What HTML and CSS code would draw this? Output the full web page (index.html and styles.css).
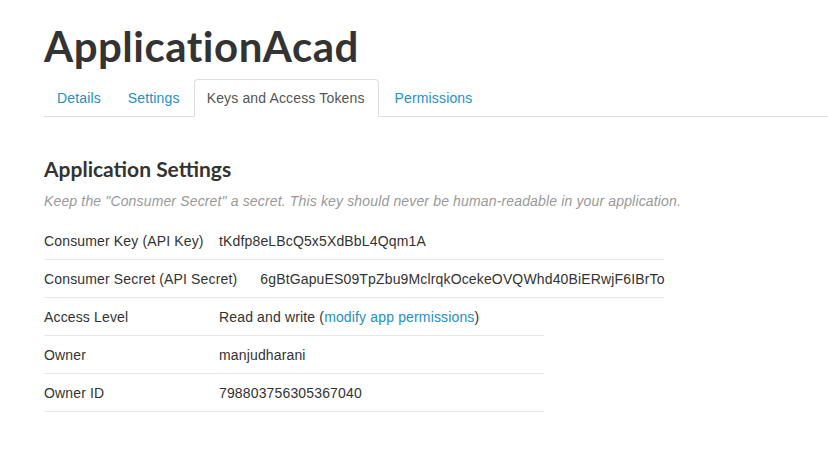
FILE: index.html
```html
<!DOCTYPE html>
<html>
<head>
<meta charset="utf-8">
<link rel="stylesheet" href="styles.css">
</head>
<body>
<div class="page">
  <h1 class="app-title">ApplicationAcad</h1>
  <ul class="tabs">
    <li class="tab"><a href="#">Details</a></li>
    <li class="tab"><a href="#">Settings</a></li>
    <li class="tab active"><a href="#">Keys and Access Tokens</a></li>
    <li class="tab"><a href="#">Permissions</a></li>
  </ul>
  <section class="settings">
    <h2 class="section-title">Application Settings</h2>
    <p class="hint">Keep the "Consumer Secret" a secret. This key should never be human-readable in your application.</p>
    <div class="group group-keys">
      <div class="row"><span class="label">Consumer Key (API Key)</span><span class="value">tKdfp8eLBcQ5x5XdBbL4Qqm1A</span></div>
      <div class="row"><span class="label label-wide">Consumer Secret (API Secret)</span><span class="value">6gBtGapuES09TpZbu9MclrqkOcekeOVQWhd40BiERwjF6IBrTo</span></div>
    </div>
    <div class="group group-info">
      <div class="row"><span class="label">Access Level</span><span class="value">Read and write (<a href="#">modify app permissions</a>)</span></div>
      <div class="row"><span class="label">Owner</span><span class="value">manjudharani</span></div>
      <div class="row"><span class="label">Owner ID</span><span class="value">798803756305367040</span></div>
    </div>
  </section>
</div>
</body>
</html>
```
FILE: styles.css
```css
html, body {
  margin: 0;
  padding: 0;
  background: #fff;
}
body {
  font-family: "Liberation Sans", Arial, sans-serif;
  font-size: 14px;
  letter-spacing: 0.15px;
  color: #333;
}
a {
  color: #2390c9;
  text-decoration: none;
}
.page {
  padding: 22px 0 0 44px;
}
.app-title {
  margin: 0;
  font-family: Lato, "Noto Sans", sans-serif;
  font-weight: 700;
  font-size: 42px;
  line-height: 48px;
  color: #333;
  letter-spacing: 0.5px;
}
.tabs {
  list-style: none;
  margin: 9px 0 0;
  padding: 0;
  display: flex;
  border-bottom: 1px solid #ddd;
}
.tab {
  margin: 0 1px -1px 0;
}
.tab a {
  display: block;
  padding: 8px 12px;
  line-height: 20px;
  border: 1px solid transparent;
  border-radius: 4px 4px 0 0;
}
.tab.active {
  margin-right: 3px;
}
.tab.active a {
  padding-right: 13px;
  color: #555;
  border-color: #ddd;
  border-bottom-color: #fff;
  background: #fff;
}
.settings {
  padding-top: 38px;
}
.section-title {
  margin: 0;
  font-family: Lato, "Noto Sans", sans-serif;
  font-weight: 700;
  font-size: 21px;
  line-height: 28px;
  color: #333;
  letter-spacing: 0;
}
.hint {
  margin: 9px 0 12px;
  font-size: 14px;
  line-height: 18px;
  font-style: italic;
  color: #999;
}
.group-keys {
  width: 620px;
}
.group-info {
  width: 500px;
}
.row {
  display: flex;
  height: 37px;
  align-items: center;
  white-space: nowrap;
  border-bottom: 1px solid #e8e8e8;
}
.label {
  flex-shrink: 0;
  min-width: 175px;
}
.label-wide {
  margin-right: 23px;
}
```
